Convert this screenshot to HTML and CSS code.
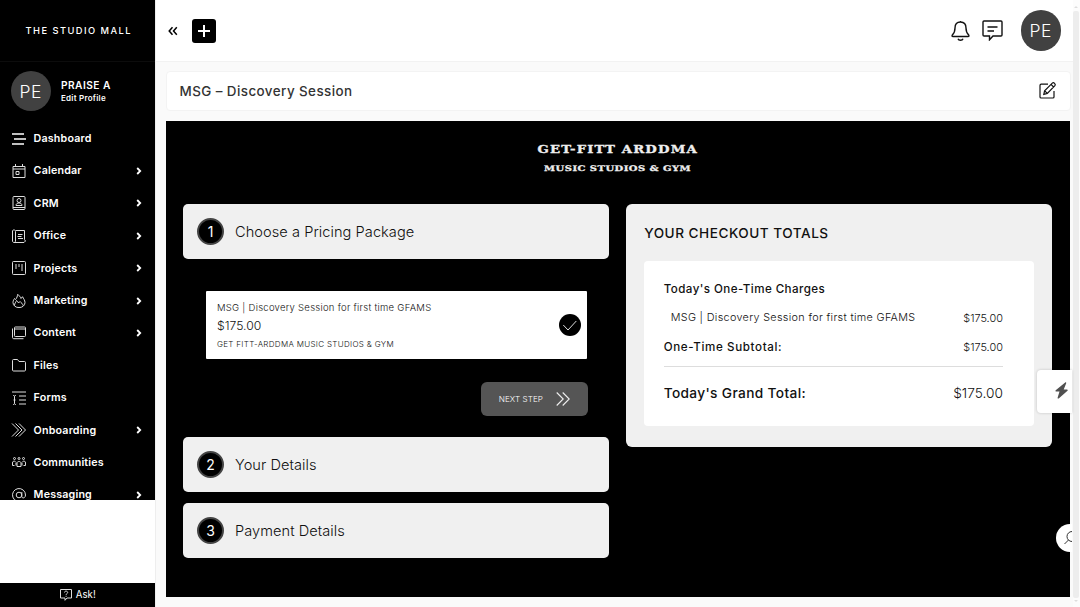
FILE: index.html
```html
<!DOCTYPE html>
<html lang="en">
<head>
<meta charset="utf-8">
<title>The Studio Mall</title>
<link rel="stylesheet" href="styles.css">
</head>
<body>
<div class="app">
  <aside class="sidebar">
    <div class="menu">
      <div class="brand"><span class="brand-text">THE STUDIO MALL</span></div>
      <div class="profile">
        <div class="avatar">PE</div>
        <div class="who"><span class="name">PRAISE A</span><span class="edit">Edit Profile</span></div>
      </div>
      <nav class="nav">
        <a class="item"><svg class="ico" viewBox="0 0 14 14"><path class="thick" d="M0 2h12M2 7h12M0 12h12"/></svg><span>Dashboard</span></a>
        <a class="item"><svg class="ico" viewBox="0 0 14 14"><path d="M1 2.500h12v11H1zM1 5h12M3.500 0v2.500M10.500 0v2.500M4 7.500h3v3H4z"/></svg><span>Calendar</span><svg class="chev" viewBox="0 0 6 8"><path d="M1.200 1l3 3-3 3"/></svg></a>
        <a class="item"><svg class="ico" viewBox="0 0 14 14"><rect x="1" y=".5" width="12" height="13" rx="1"/><path d="M1 11.500h12M4 9.500c0-2 1.500-2.500 3-2.500s3 .5 3 2.500z"/><circle cx="7" cy="4.500" r="2"/></svg><span>CRM</span><svg class="chev" viewBox="0 0 6 8"><path d="M1.200 1l3 3-3 3"/></svg></a>
        <a class="item"><svg class="ico" viewBox="0 0 14 14"><path d="M3.500 2.500V12c0 2-3 2-3 0V2c0-1.500 3-1.500 3 .5zM3.500 1.500h9v9l1 1.500-1.500 1.500H2M6 5.500h4.500M5.500 7.500h4M6 9.500h5"/></svg><span>Office</span><svg class="chev" viewBox="0 0 6 8"><path d="M1.200 1l3 3-3 3"/></svg></a>
        <a class="item"><svg class="ico" viewBox="0 0 14 14"><rect x=".5" y=".5" width="13" height="13" rx="1"/><path d="M4 3v5M7 3v3M10 3v7"/></svg><span>Projects</span><svg class="chev" viewBox="0 0 6 8"><path d="M1.200 1l3 3-3 3"/></svg></a>
        <a class="item"><svg class="ico" viewBox="0 0 14 14"><path d="M5.500.5c2 1 3 2.500 3.500 4l1.500-1.800c1 2 2.500 3.500 2.500 6A5.500 5 0 0 1 7 13.500a5.500 5 0 0 1-6-5c0-2 1-3 1.500-4l1 1C5 4 5.500 2 5.500.500zM2.500 11.500C2.500 9 4 8.500 4.500 6.500c1 .5 1.500 1.500 2 2.500L8 7.500c1 1.500 3 2 3 4"/></svg><span>Marketing</span><svg class="chev" viewBox="0 0 6 8"><path d="M1.200 1l3 3-3 3"/></svg></a>
        <a class="item"><svg class="ico" viewBox="0 0 14 14"><rect x="2.500" y="1" width="11" height="9.500" rx=".8"/><path d="M2.500 3h11M.5 2.500v9c0 .7.5 1.200 1.200 1.200H11.500"/></svg><span>Content</span><svg class="chev" viewBox="0 0 6 8"><path d="M1.200 1l3 3-3 3"/></svg></a>
        <a class="item"><svg class="ico" viewBox="0 0 14 14"><path d="M.5 12V2.500c0-.6.400-1 1-1h4l1.500 2h5.500c.6 0 1 .4 1 1V12c0 .6-.4 1-1 1h-11c-.6 0-1-.4-1-1z"/></svg><span>Files</span></a>
        <a class="item"><svg class="ico" viewBox="0 0 14 14"><path d="M0 1h14M7 5h7M7 9h7M7 13h7M1 4.500c1 0 1.500.2 1.500 1 0-.8.5-1 1.500-1M2.500 5.500v7M1 13.500c1 0 1.500-.3 1.500-1 0 .7.500 1 1.500 1M1.500 9h2"/></svg><span>Forms</span></a>
        <a class="item"><svg class="ico" viewBox="0 0 14 14"><path d="M0 .5L6.500 7 0 13.500M3.500.5L10 7l-6.500 6.500M7 .5L13.500 7 7 13.500"/></svg><span>Onboarding</span><svg class="chev" viewBox="0 0 6 8"><path d="M1.200 1l3 3-3 3"/></svg></a>
        <a class="item"><svg class="ico" viewBox="0 0 14 14"><circle cx="2.500" cy="3.500" r="1"/><circle cx="7" cy="3.500" r="1"/><circle cx="11.500" cy="3.500" r="1"/><path d="M3.500 6.500C1.500 5.500.5 6.500.5 8v2.500h2M10.500 6.500c2-1 3 0 3 1.500v2.500h-2M5 11.500V8c0-2 4-2 4 0v3.500zM4 7.500v3M10 7.500v3"/></svg><span>Communities</span></a>
        <a class="item"><svg class="ico" viewBox="0 0 14 14"><circle cx="7" cy="7" r="2.800"/><path d="M9.800 4v4.500c0 2.200 3.700 2 3.700-1.500A6.500 6.500 0 1 0 10 12.800"/></svg><span>Messaging</span><svg class="chev" viewBox="0 0 6 8"><path d="M1.200 1l3 3-3 3"/></svg></a>
      </nav>
    </div>
    <div class="ask"><svg width="12" height="12" viewBox="0 0 12 12"><path d="M.5.5h11v8.500H7L5 11.300V9H.5zM4.500 3.500c0-2 3.200-1.700 3.200 0 0 1.200-1.600 1-1.600 2.300M6.100 6.800v1"/></svg><span>Ask!</span></div>
  </aside>

  <main class="main">
    <header class="topbar">
      <svg class="collapse" viewBox="0 0 10 10"><path d="M4.500 1.200L1.200 5l3.300 3.800M8.800 1.200L5.500 5l3.300 3.800"/></svg>
      <div class="add"><svg width="12" height="12" viewBox="0 0 12 12"><path d="M6 0v12M0 6h12"/></svg></div>
      <div class="tools">
        <svg class="bell" viewBox="0 0 19 21"><path d="M9.500 1v1M9.500 2C5.500 2 4 4.700 4 8c0 4.500-1 5.500-2.700 7-.5 1-.3 1.500.7 1.500h15c1 0 1.200-.5.700-1.500C16 13.500 15 12.500 15 8c0-3.300-1.500-6-5.500-6zM7 18.700c.6 2 4.400 2 5 0"/></svg>
        <svg class="chat" viewBox="0 0 21 21"><path d="M2 1h17c.6 0 1 .4 1 1v13c0 .6-.4 1-1 1h-8l-3.500 3.800V16H2c-.6 0-1-.4-1-1V2c0-.6.4-1 1-1zM5.500 7H15.500M5.500 11h6.500"/></svg>
        <div class="avatar">PE</div>
      </div>
    </header>

    <div class="titlebar">
      <h1>MSG – Discovery Session</h1>
      <svg class="pencil" viewBox="0 0 17 17"><path d="M9 2.200H2.200C1.500 2.200 1 2.700 1 3.400V15c0 .6.500 1 1.200 1h11.600c.7 0 1.200-.4 1.200-1V9M4.800 12.300l.8-3.500 7.700-7.700c1.400-1.200 3.800 1 2.600 2.600l-7.600 7.700zM5.600 8.800l2.700 2.600M12 2.400L14.600 5"/></svg>
    </div>

    <section class="stage">
      <div class="logo"><span class="logo-a">GET-FITT ARDDMA</span><span class="logo-b">MUSIC STUDIOS &amp; GYM</span></div>
      <div class="columns">
        <div class="steps">
          <div class="step"><b class="num">1</b><span>Choose a Pricing Package</span></div>
          <div class="package">
            <div class="option">
              <div class="info"><span class="p-name">MSG | Discovery Session for first time GFAMS</span><span class="p-price">$175.00</span><span class="p-org">GET FITT-ARDDMA MUSIC STUDIOS &amp; GYM</span></div>
              <svg class="tick" viewBox="0 0 22 22"><circle cx="11" cy="11" r="11"/><path d="M4.300 11l4.700 5L17.300 7"/></svg>
            </div>
            <button class="next"><span>NEXT STEP</span><svg width="14" height="14" viewBox="0 0 14 14"><path d="M.7.500L7.200 7 .7 13.500M6.700.5L13.200 7l-6.500 6.500"/></svg></button>
          </div>
          <div class="step"><b class="num">2</b><span>Your Details</span></div>
          <div class="step"><b class="num">3</b><span>Payment Details</span></div>
        </div>
        <div class="totals">
          <h2>YOUR CHECKOUT TOTALS</h2>
          <div class="sheet">
            <div class="row head"><span>Today's One-Time Charges</span></div>
            <div class="row line"><span>MSG | Discovery Session for first time GFAMS</span><span class="amt">$175.00</span></div>
            <div class="row sub"><span>One-Time Subtotal:</span><span class="amt">$175.00</span></div>
            <div class="row grand"><span>Today's Grand Total:</span><span class="gamt">$175.00</span></div>
          </div>
        </div>
      </div>
    </section>
  </main>

  <div class="scroll"><i class="up"></i><i class="thumb"></i><i class="down"></i></div>
  <div class="bolt"><svg width="13" height="17" viewBox="0 0 13 17"><path d="M10.200.5L.7 8.200c-.4.400-.2 1.300.4 1.300h3.400L2.600 15.800c-.1.900.6 1 1.100.6l8.800-7.600c.5-.5.200-1.300-.5-1.300H8.700l2.500-6.200c.2-.9-.5-1.200-1-.8z"/></svg></div>
  <div class="search"><svg width="14" height="14" viewBox="0 0 14 14"><circle cx="8" cy="5.500" r="5"/><path d="M4.500 9L.5 13"/></svg></div>
</div>
</body>
</html>
```
FILE: styles.css
```css
* { box-sizing: border-box; }
body { margin: 0; background: #fafafa; font-family: Inter, "Open Sans", sans-serif; color: #111; }
svg { fill: none; flex: none; display: block; }
.app { position: relative; display: flex; width: 1080px; height: 607px; overflow: hidden; }
.sidebar { width: 155.500px; display: flex; flex-direction: column; justify-content: space-between; background: #fff; color: #fff; border-right: 1px solid #eee; }
.menu { height: 500px; overflow: hidden; background: #000; }
.brand { height: 62px; display: flex; align-items: center; padding-left: 25.500px; border-bottom: 1px solid #0c0c0c; }
.brand-text { font-size: 9.300px; letter-spacing: 1.470px; font-weight: 500; white-space: nowrap; }
.profile { height: 60px; display: flex; align-items: center; padding: 0 0 2px 10.500px; gap: 10px; }
.avatar { width: 40.500px; height: 40.500px; border-radius: 50%; background: #414141; color: #fff; display: flex; align-items: center; justify-content: center; font-size: 17.500px; font-weight: 300; letter-spacing: .500px; }
.who { display: flex; flex-direction: column; font-weight: 600; white-space: nowrap; }
.name { font-size: 10.200px; line-height: 14px; letter-spacing: .450px; }
.edit { font-size: 8px; line-height: 13px; letter-spacing: .250px; }
.nav { display: flex; flex-direction: column; padding-top: .400px; }
.item { height: 32.400px; flex: none; display: flex; align-items: center; padding: 0 13px 0 12px; font-size: 10.700px; font-weight: 600; letter-spacing: .180px; }
.ico { width: 14px; height: 14px; margin-right: 7.600px; stroke: #ddd; stroke-width: 1; overflow: visible; }
.ico .thick { stroke: #fff; stroke-width: 1.500; }
.chev { width: 6px; height: 8px; margin-left: auto; stroke: #fff; stroke-width: 1.800; }
.ask { height: 24.500px; background: #000; display: flex; align-items: center; justify-content: center; gap: 4px; padding-left: 1px; font-size: 9.700px; }
.ask svg { stroke: #ddd; }

.main { width: 917px; padding-bottom: 10px; display: flex; flex-direction: column; }
.topbar { height: 62px; flex: none; background: #fff; border-bottom: 1px solid #f2f2f2; display: flex; align-items: center; padding: 0 11.500px 0 12.500px; }
.collapse { width: 10px; height: 10px; stroke: #000; stroke-width: 1.500; margin-right: 14px; }
.add { width: 24px; height: 24px; border-radius: 3px; background: #000; display: flex; align-items: center; justify-content: center; }
.add svg { stroke: #fff; stroke-width: 2; }
.tools { margin-left: auto; display: flex; align-items: center; }
.tools svg { stroke: #111; stroke-width: 1.400; }
.bell { width: 19px; height: 21px; margin-right: 11.500px; }
.chat { width: 21px; height: 21px; margin-right: 18px; }
.titlebar { height: 40px; flex: none; margin: 9px 2px 10px 10px; background: #fff; border: 1px solid #f3f3f3; border-radius: 4px; display: flex; align-items: center; justify-content: space-between; padding: 0 14px 1px 13px; }
h1 { margin: 0; font-size: 13.400px; font-weight: 500; color: #333; letter-spacing: .440px; }
.pencil { width: 17px; height: 17px; stroke: #111; stroke-width: 1.200; overflow: visible; }

.stage { flex: 1; margin: 0 3px 0 10.500px; background: #000; }
.logo { height: 83px; padding-top: 22px; display: flex; flex-direction: column; align-items: center; color: #eee; font-family: "DejaVu Serif", serif; font-weight: bold; white-space: nowrap; }
.logo span { transform: scaleX(1.300); -webkit-text-stroke: .3px #eee; }
.logo-a { font-size: 10.200px; line-height: 13px; letter-spacing: .880px; }
.logo-b { font-size: 7.700px; line-height: 12px; margin-top: 7px; letter-spacing: .350px; }
.columns { display: flex; align-items: flex-start; gap: 17px; padding: 0 17px; }
.steps, .totals { width: 426.200px; flex: none; }
.step { height: 55px; margin-bottom: 11px; border-radius: 5px; background: #f0f0f0; display: flex; align-items: center; gap: 11px; padding-left: 14px; font-size: 14.600px; font-weight: 300; letter-spacing: .050px; }
.num { width: 27px; height: 27px; border-radius: 50%; background: #000; border: 2px solid #444; color: #fff; display: flex; align-items: center; justify-content: center; font-size: 14px; font-weight: 400; }
.package { height: 167px; padding: 21px 21.500px 0 23px; }
.option { width: 380.500px; height: 68px; background: #fff; border-radius: 1px; display: flex; align-items: center; justify-content: space-between; padding: 0 6px 0 11px; }
.info { display: flex; flex-direction: column; padding-top: 1px; white-space: nowrap; }
.p-name { font-size: 9.500px; line-height: 16px; letter-spacing: .270px; font-weight: 300; }
.p-price { font-size: 12.200px; line-height: 20px; font-weight: 300; }
.p-org { font-size: 8px; line-height: 16px; letter-spacing: .320px; font-weight: 300; }
.tick { width: 22px; height: 22px; }
.tick circle { fill: #000; }
.tick path { stroke: #ddd; }
.next { display: flex; align-items: center; justify-content: space-between; width: 107px; height: 34px; margin: 23px 0 0 auto; padding: 0 18px; border: 0; border-radius: 6px; background: #555; color: #fff; font: 300 8.100px Inter, sans-serif; letter-spacing: .080px; white-space: nowrap; }
.next svg { stroke: #eee; stroke-width: 1.100; }
.totals { height: 243px; border-radius: 6px; background: #f0f0f0; padding: 0 18px; }
h2 { margin: 0; height: 57px; line-height: 58px; font-size: 13.600px; font-weight: 500; letter-spacing: .510px; white-space: nowrap; }
.sheet { height: 165px; background: #fff; border-radius: 4px; padding: 13px 31.500px 0 19.500px; }
.row { display: flex; justify-content: space-between; align-items: center; height: 29px; white-space: nowrap; }
.head, .sub { font-size: 11.600px; font-weight: 500; letter-spacing: .430px; }
.sub { letter-spacing: .620px; }
.line { font-size: 10.800px; font-weight: 300; padding-left: 7px; letter-spacing: .330px; }
.amt { font-size: 10.900px; font-weight: 300; letter-spacing: 0; }
.grand { height: 55px; margin-top: 5px; padding-bottom: 2px; border-top: 1px solid #ddd; font-size: 13.700px; font-weight: 500; letter-spacing: .360px; }
.gamt { font-size: 13.700px; font-weight: 300; letter-spacing: 0; }

.scroll { width: 7.500px; display: flex; flex-direction: column; align-items: center; justify-content: space-between; background: #fcfcfc; padding: 4px 0 3px; }
.thumb { width: 6px; height: 587px; background: #ededed; border-radius: 2px; }
.up, .down { border: 2px solid transparent; }
.up { border-bottom-color: #ddd; }
.down { border-top-color: #ddd; }
.bolt { position: absolute; left: 1037px; top: 370px; width: 35px; height: 43px; background: #fff; border-radius: 4px 0 0 4px; box-shadow: 0 0 3px #0003; display: flex; align-items: center; padding: 0 0 2px 18px; }
.bolt svg { fill: #505050; }
.search { position: absolute; left: 1056px; top: 524px; width: 16px; height: 28px; background: #fff; border-radius: 14px 0 0 14px; overflow: hidden; display: flex; align-items: center; padding-left: 8px; }
.search svg { stroke: #333; }
```
